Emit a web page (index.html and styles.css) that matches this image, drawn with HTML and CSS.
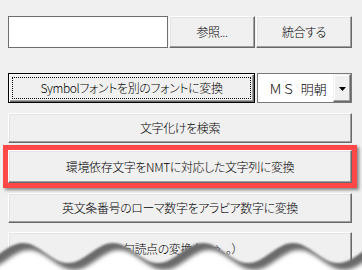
FILE: index.html
```html
<!DOCTYPE html>
<html lang="ja">
<head>
<meta charset="utf-8">
<link rel="stylesheet" href="styles.css">
</head>
<body>
<div class="panel">
  <div class="row top">
    <div class="textbox"></div>
    <div class="btn ref">参照...</div>
    <div class="btn merge">統合する</div>
  </div>
  <div class="row font-row">
    <div class="btn default"><span class="focus">Symbolフォントを別のフォントに変換</span></div>
    <div class="combo">
      <span class="combo-text">ＭＳ 明朝</span>
      <span class="combo-btn"><svg width="7" height="4" viewBox="0 0 7 4"><path d="M0 0H7L3.5 4Z" fill="#000"/></svg></span>
    </div>
  </div>
  <div class="btn full search">文字化けを検索</div>
  <div class="highlight"><div class="btn full inner">環境依存文字をNMTに対応した文字列に変換</div></div>
  <div class="btn full roman">英文条番号のローマ数字をアラビア数字に変換</div>
  <div class="btn full punct">句読点の変換（，．⇒、。）</div>
</div>
<svg class="torn" width="362" height="40" viewBox="0 0 362 40">
  <defs>
    <filter id="b1" x="-10%" y="-50%" width="120%" height="200%"><feGaussianBlur stdDeviation="1"/></filter>
    <filter id="b2" x="-10%" y="-50%" width="120%" height="200%"><feGaussianBlur stdDeviation="2.2"/></filter>
  </defs>
  <path filter="url(#b1)" fill="#6a6a6a" d="M -22 33 C -5.5 33, 6.5 13, 23 13 C 39.5 13, 51.5 33, 68 33 C 84.5 33, 96.5 13, 113 13 C 129.5 13, 141.5 33, 158 33 C 174.5 33, 186.5 13, 203 13 C 219.5 13, 231.5 33, 248 33 C 264.5 33, 276.5 13, 293 13 C 309.5 13, 321.5 33, 338 33 C 354.5 33, 366.5 13, 383 13 L 383 60 L -22 60 Z"/>
  <path filter="url(#b2)" fill="#ffffff" transform="translate(6 7)" d="M -22 33 C -5.5 33, 6.5 13, 23 13 C 39.5 13, 51.5 33, 68 33 C 84.5 33, 96.5 13, 113 13 C 129.5 13, 141.5 33, 158 33 C 174.5 33, 186.5 13, 203 13 C 219.5 13, 231.5 33, 248 33 C 264.5 33, 276.5 13, 293 13 C 309.5 13, 321.5 33, 338 33 C 354.5 33, 366.5 13, 383 13 L 383 60 L -22 60 Z"/>
</svg>
</body>
</html>
```

FILE: styles.css
```css
html, body {
  margin: 0;
  width: 362px;
  height: 270px;
  overflow: hidden;
  background: #f0f0f0;
}
body {
  position: relative;
  font-family: "Noto Sans CJK JP", sans-serif;
  font-size: 12px;
  font-weight: 300;
  font-feature-settings: "palt" 1;
  color: #000;
}
.panel {
  display: flex;
  flex-direction: column;
  padding: 16px 10px 0 8px;
}
.row {
  display: flex;
}
.top {
  height: 32px;
  gap: 1px;
}
.textbox {
  box-sizing: border-box;
  width: 160px;
  background: #fff;
  border: 1px solid #6e6e6e;
}
.btn {
  box-sizing: border-box;
  display: flex;
  align-items: center;
  justify-content: center;
  background: #f0f0f0;
  border: 1px solid;
  border-color: #fff #696969 #696969 #fff;
  box-shadow: inset -1px -1px #a0a0a0, inset 1px 1px #e3e3e3;
  line-height: 1;
  white-space: nowrap;
  letter-spacing: -0.4px;
}
.ref { width: 86px; }
.merge { width: 96px; }
.font-row {
  margin-top: 25px;
  height: 30px;
  gap: 2px;
}
.default {
  width: 247px;
  padding: 3px;
  border: 1px solid #000;
  box-shadow: inset 1px 1px #fff, inset -1px -1px #696969, inset -2px -2px #a0a0a0;
}
.focus {
  box-sizing: border-box;
  flex: 1;
  align-self: stretch;
  display: flex;
  align-items: center;
  justify-content: center;
  border: 1px dotted #000;
}
.combo {
  box-sizing: border-box;
  width: 95px;
  display: flex;
  background: #fff;
  border: 1px solid #7a7a7a;
}
.combo-text {
  flex: 1;
  display: flex;
  align-items: center;
  padding-left: 11px;
  font-size: 13px;
  font-feature-settings: normal;
  word-spacing: 3px;
}
.combo-btn {
  box-sizing: border-box;
  width: 18px;
  display: flex;
  align-items: center;
  justify-content: center;
  background: #f0f0f0;
  border: 1px solid;
  border-color: #f0f0f0 #696969 #696969 #f0f0f0;
  box-shadow: inset -1px -1px #a0a0a0, inset 1px 1px #fff;
  padding-top: 2px;
}
.full {
  height: 30px;
}
.search {
  margin-top: 10px;
}
.highlight {
  margin: 2px -5px 0 -5px;
  border: 5px solid #fe4747;
  box-shadow: 2px 2px 3px rgba(0, 0, 0, 0.45);
  display: flex;
  flex-direction: column;
}
.inner {
  height: 33px;
}
.roman {
  margin-top: 5px;
}
.punct {
  margin-top: 9px;
  height: 40px;
  align-items: flex-start;
  padding-top: 10px;
}
.torn {
  position: absolute;
  left: 0;
  top: 230px;
}
```
